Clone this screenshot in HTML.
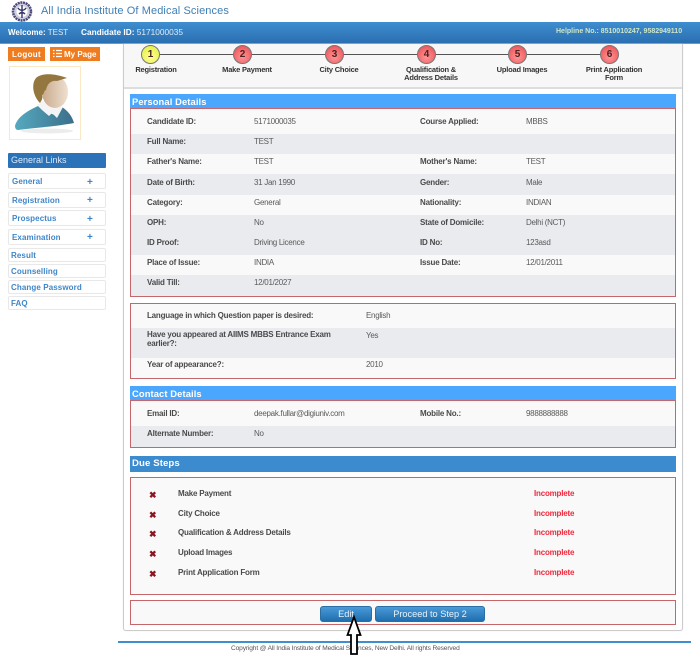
<!DOCTYPE html>
<html><head><meta charset="utf-8"><style>
html,body{margin:0;padding:0;background:#fff}
#p{position:relative;width:700px;height:670px;overflow:hidden;font-family:"Liberation Sans",sans-serif;background:#fff}
#p div{position:absolute;box-sizing:border-box;white-space:nowrap}
.l{font-size:8px;letter-spacing:-.2px;font-weight:bold;color:#4a4a4a;line-height:13px}
.v{font-size:8px;letter-spacing:-.28px;color:#5a5a5a;line-height:13px}
.hd{left:130px;width:546px;background:#4ba6fd;color:#fff;font-weight:bold;font-size:9.4px;line-height:15px;height:15px;padding-left:2px;letter-spacing:.1px}
.box{left:130px;width:546px;border:1px solid #c4666a;background:#f9f9f9}
.g{left:131px;width:544px;background:#e9ebef}
.c{width:19px;height:19px;top:45px;border-radius:50%;border:1px solid #777;background:radial-gradient(circle at 50% 65%,#ff9494,#e9484e);font-size:10px;font-weight:bold;line-height:18px;text-align:center;color:#4a2222}
.s{font-size:7.5px;letter-spacing:-.2px;font-weight:bold;color:#333;text-align:center;line-height:8px;top:66px;white-space:normal!important}
.m{left:8px;width:98px;background:#fff;border:1px solid #e8e8e8;border-radius:2px;color:#3f86c8;font-weight:bold;font-size:8px;letter-spacing:.1px}
.pl{left:87px;font-size:10px;line-height:12px;font-weight:bold;color:#3f86c8}
.x{left:149px;font-size:9px;font-weight:bold;color:#8c1520;line-height:12px}
.i{left:534px;font-size:8px;letter-spacing:-.2px;font-weight:bold;color:#f0283c;line-height:13px}
.btn{top:606px;height:16px;border-radius:3px;background:linear-gradient(#4a9ad8,#1f6eae);border:1px solid #2a6ea5;color:#e8f2fa;font-size:9.2px;line-height:15px;text-align:center}
</style></head><body><div id="p">

<svg style="position:absolute;left:11px;top:1px" width="22" height="21" viewBox="0 0 22 21"><circle cx="11" cy="10.500" r="9" fill="#cfcde0" stroke="#4b4a78" stroke-width="2.500" stroke-dasharray="2 .7"/><circle cx="11" cy="10.500" r="5.500" fill="#fff"/><path d="M11 4v13M7 7c2 3 6 3 8 0M8 13c2-2 4-2 6 0" stroke="#33326a" stroke-width="1.400" fill="none"/></svg>
<div style="left:41px;top:4px;font-size:11px;line-height:15px;color:#3f7fb5;letter-spacing:.1px">All India Institute Of Medical Sciences</div>

<div style="left:0;top:22px;width:700px;height:22px;background:linear-gradient(#3f8ecf,#2a6fb1);border-bottom:1px solid #5a9fd6"></div>
<div style="left:8px;top:26px;font-size:8px;line-height:13px;color:#dfeaf5"><b style="color:#fff">Welcome:</b> TEST</div>
<div style="left:81px;top:26px;font-size:8.300px;line-height:13px;color:#dfeaf5"><b style="color:#fff">Candidate ID:</b> 5171000035</div>
<div style="left:556px;top:26px;font-size:7px;line-height:11px;font-weight:bold;color:#cfe6c8">Helpline No.: 8510010247, 9582949110</div>

<div style="left:8px;top:47px;width:37px;height:14px;background:#ef7d1f;color:#fff;font-size:8px;font-weight:bold;line-height:15px;text-align:center;letter-spacing:.3px">Logout</div>
<div style="left:50px;top:47px;width:50px;height:14px;background:#ef7d1f;color:#fff;font-size:8px;font-weight:bold;line-height:15px;padding-left:14px">My Page</div>
<svg style="position:absolute;left:52px;top:49px" width="11" height="10"><path d="M1 1.500h1.500M1 4.500h1.500M1 7.500h1.500M4 1.500h6M4 4.500h6M4 7.500h6" stroke="#fff" stroke-width="1.300"/></svg>

<div style="left:9px;top:66px;width:72px;height:74px;border:1px solid #fbe8c4;background:#fff"></div>
<svg style="position:absolute;left:9px;top:66px" width="72" height="74" viewBox="0 0 72 74">
<defs><linearGradient id="b" x1="0" x2="1"><stop offset="0" stop-color="#55a9bf"/><stop offset="1" stop-color="#3b6f8b"/></linearGradient><linearGradient id="f" x1="0" x2="1"><stop offset="0" stop-color="#c9a98c"/><stop offset="1" stop-color="#eee0cf"/></linearGradient></defs>
<ellipse cx="38" cy="65" rx="26" ry="2.500" fill="#ececec"/>
<path d="M6 60C8 52 16 46 29 40L36 45 48 50 53 41C59 45 63 50 65 57 50 60 25 62 9 64 7 64 6 62 6 60Z" fill="url(#b)"/>
<path d="M28 39L35 34 50 40 54 41 48 52 43 47 40 50 33 44Z" fill="#f4f4f4"/>
<ellipse cx="46" cy="26" rx="13" ry="16" fill="url(#f)"/>
<path d="M31 37C24 30 22 18 27 12 32 7 45 7 58 12L48 15C42 14 38 18 37 24 35 24 35 29 33 29 34 32 33 34 31 37Z" fill="#94773f"/>
</svg>

<div style="left:8px;top:153px;width:98px;height:15px;background:#2c72b8;color:#dbe8f5;font-size:9px;line-height:15px;padding-left:3px;border-radius:1px">General Links</div>
<div class="m" style="top:173px;height:16px;line-height:15px;padding-left:3px">General</div>
<div class="m" style="top:192px;height:16px;line-height:15px;padding-left:3px">Registration</div>
<div class="m" style="top:210px;height:16px;line-height:15px;padding-left:3px">Prospectus</div>
<div class="m" style="top:229px;height:16px;line-height:15px;padding-left:3px">Examination</div>
<div class="m" style="top:248px;height:14px;line-height:13px;padding-left:2px">Result</div>
<div class="m" style="top:264px;height:14px;line-height:13px;padding-left:2px">Counselling</div>
<div class="m" style="top:280px;height:14px;line-height:13px;padding-left:2px">Change Password</div>
<div class="m" style="top:296px;height:14px;line-height:13px;padding-left:2px">FAQ</div>
<div class="pl" style="top:177px">+</div>
<div class="pl" style="top:195px">+</div>
<div class="pl" style="top:214px">+</div>
<div class="pl" style="top:232px">+</div>

<div style="left:123px;top:44px;width:560px;height:587px;border:1px solid #ccc;border-top:0;border-radius:0 0 3px 3px;background:#fff;box-shadow:0 0 1px #ddd"></div>
<div style="left:124px;top:44px;width:558px;height:45px;background:#f7f7f7;border-bottom:2px solid #ddd"></div>
<div style="left:155px;top:54px;width:450px;height:1px;background:#555"></div>
<div class="c" style="left:141px;background:radial-gradient(circle at 50% 65%,#fdfd90,#dff03a)">1</div>
<div class="c" style="left:233px">2</div>
<div class="c" style="left:325px">3</div>
<div class="c" style="left:417px">4</div>
<div class="c" style="left:508px">5</div>
<div class="c" style="left:600px">6</div>
<div class="s" style="left:126px;width:60px">Registration</div>
<div class="s" style="left:212px;width:70px">Make Payment</div>
<div class="s" style="left:304px;width:70px">City Choice</div>
<div class="s" style="left:396px;width:70px">Qualification &amp; Address Details</div>
<div class="s" style="left:487px;width:70px">Upload Images</div>
<div class="s" style="left:584px;width:60px">Print Application Form</div>

<div class="hd" style="top:94px">Personal Details</div>
<div class="box" style="top:108px;height:189px"></div>
<div class="g" style="top:134px;height:20px"></div>
<div class="g" style="top:174px;height:21px"></div>
<div class="g" style="top:215px;height:40px"></div>
<div class="g" style="top:275px;height:21px"></div>
<div class="l" style="left:147px;top:115px">Candidate ID:</div><div class="v" style="left:254px;top:115px">5171000035</div><div class="l" style="left:420px;top:115px">Course Applied:</div><div class="v" style="left:526px;top:115px">MBBS</div>
<div class="l" style="left:147px;top:135px">Full Name:</div><div class="v" style="left:254px;top:135px">TEST</div>
<div class="l" style="left:147px;top:155px">Father's Name:</div><div class="v" style="left:254px;top:155px">TEST</div><div class="l" style="left:420px;top:155px">Mother's Name:</div><div class="v" style="left:526px;top:155px">TEST</div>
<div class="l" style="left:147px;top:176px">Date of Birth:</div><div class="v" style="left:254px;top:176px">31 Jan 1990</div><div class="l" style="left:420px;top:176px">Gender:</div><div class="v" style="left:526px;top:176px">Male</div>
<div class="l" style="left:147px;top:196px">Category:</div><div class="v" style="left:254px;top:196px">General</div><div class="l" style="left:420px;top:196px">Nationality:</div><div class="v" style="left:526px;top:196px">INDIAN</div>
<div class="l" style="left:147px;top:216px">OPH:</div><div class="v" style="left:254px;top:216px">No</div><div class="l" style="left:420px;top:216px">State of Domicile:</div><div class="v" style="left:526px;top:216px">Delhi (NCT)</div>
<div class="l" style="left:147px;top:236px">ID Proof:</div><div class="v" style="left:254px;top:236px">Driving Licence</div><div class="l" style="left:420px;top:236px">ID No:</div><div class="v" style="left:526px;top:236px">123asd</div>
<div class="l" style="left:147px;top:256px">Place of Issue:</div><div class="v" style="left:254px;top:256px">INDIA</div><div class="l" style="left:420px;top:256px">Issue Date:</div><div class="v" style="left:526px;top:256px">12/01/2011</div>
<div class="l" style="left:147px;top:276px">Valid Till:</div><div class="v" style="left:254px;top:276px">12/01/2027</div>

<div class="box" style="top:303px;height:76px"></div>
<div class="g" style="top:328px;height:30px"></div>
<div class="l" style="left:147px;top:309px">Language in which Question paper is desired:</div><div class="v" style="left:366px;top:309px">English</div>
<div class="l" style="left:147px;top:330px;line-height:9px">Have you appeared at AIIMS MBBS Entrance Exam<br>earlier?:</div><div class="v" style="left:366px;top:329px">Yes</div>
<div class="l" style="left:147px;top:358px">Year of appearance?:</div><div class="v" style="left:366px;top:358px">2010</div>

<div class="hd" style="top:386px">Contact Details</div>
<div class="box" style="top:400px;height:48px"></div>
<div class="g" style="top:426px;height:21px"></div>
<div class="l" style="left:147px;top:407px">Email ID:</div><div class="v" style="left:254px;top:407px">deepak.fullar@digiuniv.com</div><div class="l" style="left:420px;top:407px">Mobile No.:</div><div class="v" style="left:526px;top:407px">9888888888</div>
<div class="l" style="left:147px;top:427px">Alternate Number:</div><div class="v" style="left:254px;top:427px">No</div>

<div class="hd" style="top:456px;height:16px;background:#3d8bcf;font-size:9.600px;line-height:16px;padding-left:2px">Due Steps</div>
<div class="box" style="top:477px;height:118px"></div>
<div class="x" style="top:489px">✖</div><div class="l" style="left:178px;top:487px">Make Payment</div><div class="i" style="top:487px">Incomplete</div>
<div class="x" style="top:509px">✖</div><div class="l" style="left:178px;top:507px">City Choice</div><div class="i" style="top:507px">Incomplete</div>
<div class="x" style="top:528px">✖</div><div class="l" style="left:178px;top:526px">Qualification &amp; Address Details</div><div class="i" style="top:526px">Incomplete</div>
<div class="x" style="top:548px">✖</div><div class="l" style="left:178px;top:546px">Upload Images</div><div class="i" style="top:546px">Incomplete</div>
<div class="x" style="top:568px">✖</div><div class="l" style="left:178px;top:566px">Print Application Form</div><div class="i" style="top:566px">Incomplete</div>

<div class="box" style="top:600px;height:25px"></div>
<div class="btn" style="left:320px;width:52px">Edit</div>
<div class="btn" style="left:375px;width:110px">Proceed to Step 2</div>

<div style="left:118px;top:641px;width:573px;height:2px;background:#3f8fd0"></div>
<div style="left:231px;top:644px;font-size:6.600px;letter-spacing:-.13px;line-height:10px;color:#555">Copyright @ All India Institute of Medical Sciences, New Delhi. All rights Reserved</div>

<svg style="position:absolute;left:346px;top:614px" width="16" height="42" viewBox="0 0 16 42"><path d="M8 3L14.500 21H11V40H5V21H1.500Z" fill="#fff" stroke="#000" stroke-width="1.800"/></svg>
</div></body></html>
